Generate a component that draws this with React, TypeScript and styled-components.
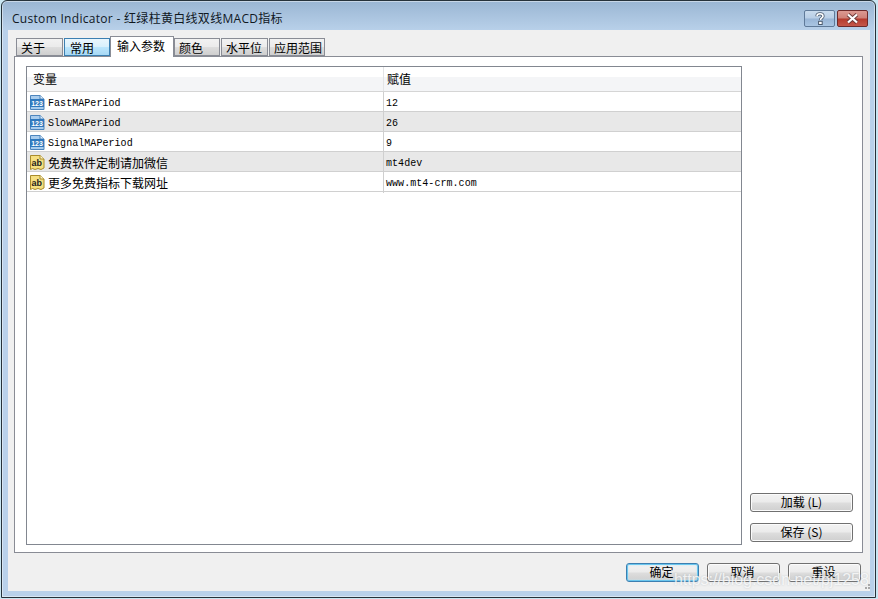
import React from "react";
import styled, { createGlobalStyle } from "styled-components";

const CJK = `"Noto Sans CJK SC", "Liberation Sans", sans-serif`;

const Global = createGlobalStyle`
  html, body { margin: 0; padding: 0; width: 878px; height: 599px; overflow: hidden; background: #c9e6f2; }
  * { box-sizing: border-box; }
`;

const Frame = styled.div`
  position: relative;
  width: 875px;
  height: 598px;
  margin-left: 1px;
  border: 1px solid #26323a;
  border-radius: 6px 6px 0 0;
  background: linear-gradient(180deg, #9ab6d3 0, #b9d1ea 30px);
  box-shadow: inset 0 0 0 1px rgba(255, 255, 255, 0.45);
  display: flex;
  flex-direction: column;
  font-family: ${CJK};
  color: #000;
  font-size: 12px;
`;

const TitleBar = styled.div`
  height: 29px;
  flex: none;
  display: flex;
  align-items: center;
  justify-content: space-between;
  padding: 5px 7px 0 10px;
`;

const Title = styled.div`
  font-family: "Open Sans", ${CJK};
  font-size: 12px;
  letter-spacing: 0.3px;
  color: #10181f;
  white-space: nowrap;
`;

const Captions = styled.div`
  display: flex;
  gap: 2px;
`;

const Caption = styled.div<{ $close?: boolean }>`
  width: 31px;
  height: 17px;
  border: 1px solid ${(p) => (p.$close ? "#6d2a2a" : "#5f7a99")};
  border-radius: 2px;
  display: flex;
  align-items: center;
  justify-content: center;
  background: ${(p) =>
    p.$close
      ? "linear-gradient(180deg, #dc9a92 0, #cf8077 48%, #b53a2c 52%, #c4574a 100%)"
      : "linear-gradient(180deg, #c9dbed 0, #b8cee6 48%, #98b5d6 52%, #a9c5e2 100%)"};
`;

const Client = styled.div`
  flex: none;
  width: 862px;
  height: 561px;
  margin-left: 6px;
  background: #f0f0f0;
  padding: 6px 7px 0 6px;
  display: flex;
  flex-direction: column;
`;

const Tabs = styled.div`
  display: flex;
  align-items: flex-end;
  height: 20px;
  padding-left: 2px;
  flex: none;
  position: relative;
  z-index: 1;
`;

const Tab = styled.div<{ $w: number; $state?: "hover" | "active"; $gap?: number }>`
  width: ${(p) => p.$w}px;
  margin-right: ${(p) => p.$gap ?? 0}px;
  height: ${(p) => (p.$state === "active" ? "21px" : "18px")};
  margin-bottom: ${(p) => (p.$state === "active" ? "-1px" : "0")};
  border: 1px solid ${(p) => (p.$state === "hover" ? "#3c7fb1" : "#898c95")};
  border-bottom: ${(p) => (p.$state === "active" ? "none" : undefined)};
  background: ${(p) =>
    p.$state === "active"
      ? "#fff"
      : p.$state === "hover"
      ? "linear-gradient(180deg, #eaf6fd 0, #d9f0fc 48%, #bce5fc 52%, #a7d9f5 100%)"
      : "linear-gradient(180deg, #f2f2f2 0, #ebebeb 48%, #dddddd 52%, #cfcfcf 100%)"};
  padding-left: ${(p) => (p.$state === "active" ? "6px" : p.$state === "hover" ? "5px" : "4px")};
  line-height: 17px;
  font-size: 12px;
  white-space: nowrap;
`;

const Panel = styled.div`
  width: 849px;
  height: 497px;
  flex: none;
  background: #fff;
  border: 1px solid #898c95;
  padding: 9px 9px 8px 11px;
  display: flex;
  gap: 8px;
`;

const List = styled.div`
  width: 716px;
  height: 479px;
  flex: none;
  border: 1px solid #828790;
  display: flex;
  flex-direction: column;
`;

const HeaderRow = styled.div`
  height: 25px;
  flex: none;
  display: grid;
  grid-template-columns: 357px 1fr;
  background: linear-gradient(180deg, #fff 0, #fff 40%, #f4f5f7 42%, #f4f5f7 100%);
  border-bottom: 1px solid #d5d5d5;
`;

const HeaderCell = styled.div<{ $sep?: boolean }>`
  padding-left: ${(p) => (p.$sep ? "3px" : "6px")};
  line-height: 24px;
  font-size: 12px;
  border-right: ${(p) => (p.$sep ? "none" : "1px solid #e3e4e6")};
`;

const Row = styled.div<{ $alt?: boolean }>`
  height: 20px;
  flex: none;
  display: grid;
  grid-template-columns: 357px 1fr;
  background: ${(p) => (p.$alt ? "#e8e8e8" : "#fff")};
  border-bottom: 1px solid #d0d0d0;
`;

const NameCell = styled.div`
  display: flex;
  align-items: center;
  gap: 3px;
  padding-left: 2px;
  border-right: 1px solid #cfcfcf;
  min-width: 0;
`;

const MonoText = styled.span`
  font-family: "Liberation Mono", monospace;
  font-size: 10px;
  letter-spacing: 0.05px;
  line-height: 19px;
  padding-top: 2px;
  white-space: pre;
`;

const CjkText = styled.span`
  font-size: 12px;
  line-height: 19px;
  white-space: nowrap;
`;

const ValueCell = styled.div`
  display: flex;
  align-items: center;
  padding-left: 2px;
`;

const Side = styled.div`
  flex: 1;
  display: flex;
  flex-direction: column;
  justify-content: flex-end;
  gap: 11px;
  padding-bottom: 2px;
`;

const Btn = styled.div<{ $default?: boolean; $w?: number }>`
  width: ${(p) => (p.$w ? `${p.$w}px` : "100%")};
  height: 19px;
  padding: 0 ${(p) => (p.$w ? "2px" : "0")} 2px 0;
  border: 1px solid ${(p) => (p.$default ? "#3c7fb1" : "#707070")};
  border-radius: 3px;
  display: flex;
  align-items: center;
  justify-content: center;
  font-size: 12px;
  white-space: nowrap;
  background: linear-gradient(180deg, #f2f2f2 0, #ebebeb 48%, #dddddd 52%, #cfcfcf 100%);
  box-shadow: ${(p) =>
    p.$default ? "inset 0 0 0 1px #6ac6ee, inset 0 0 2px 1px #bfe6f7" : "inset 0 0 0 1px #fbfbfb"};
`;

const Footer = styled.div`
  display: flex;
  justify-content: flex-end;
  gap: 8px;
  padding: 10px 2px 0 0;
`;

const Watermark = styled.div`
  position: absolute;
  left: 672px;
  top: 570px;
  font-family: "Liberation Sans", sans-serif;
  font-size: 16px;
  letter-spacing: -0.03px;
  color: rgba(255, 255, 255, 0.78);
  text-shadow: 0 0 2px rgba(150, 160, 170, 0.55);
  white-space: nowrap;
`;

const Grip = styled.svg`
  position: absolute;
  right: 4px;
  bottom: 6px;
`;

const NumIcon = () => (
  <svg width="16" height="17" viewBox="0 0 16 17">
    <path d="M1.5 1.5H11L15 5V15.5H1.5Z" fill="#a9cdee" stroke="#4d85bd" />
    <path d="M11 1.5V5H15" fill="#e3f0fb" stroke="#4d85bd" />
    <rect x="1" y="5" width="14" height="8" fill="#2f78bd" />
    <text x="8" y="11.7" textAnchor="middle" fontFamily="Liberation Sans" fontWeight="700" fontSize="7" fill="#fff">123</text>
  </svg>
);

const StrIcon = () => (
  <svg width="16" height="17" viewBox="0 0 16 17">
    <path d="M1.5 1.5H11L15 5V14L12 15.5L9 14.5L6 15.5L3.5 14.5L1.5 15.5Z" fill="#f5df80" stroke="#a98c2c" />
    <path d="M11 1.5V5H15" fill="#fff5c8" stroke="#a98c2c" />
    <text x="7.8" y="11.5" textAnchor="middle" fontFamily="Liberation Sans" fontWeight="700" fontSize="9" fill="#1c1c1c">ab</text>
  </svg>
);

const rows: { name: string; value: string; kind: "num" | "str" }[] = [
  { name: "FastMAPeriod", value: "12", kind: "num" },
  { name: "SlowMAPeriod", value: "26", kind: "num" },
  { name: "SignalMAPeriod", value: "9", kind: "num" },
  { name: "免费软件定制请加微信", value: "mt4dev", kind: "str" },
  { name: "更多免费指标下载网址", value: "www.mt4-crm.com", kind: "str" },
];

const tabs: { label: string; w: number; state?: "hover" | "active"; gap?: number }[] = [
  { label: "关于", w: 47, gap: 1 },
  { label: "常用", w: 46, state: "hover" },
  { label: "输入参数", w: 64, state: "active" },
  { label: "颜色", w: 46, gap: 1 },
  { label: "水平位", w: 47, gap: 1 },
  { label: "应用范围", w: 56 },
];

export default function App() {
  return (
    <>
      <Global />
      <Frame>
        <TitleBar>
          <Title>Custom Indicator - 红绿柱黄白线双线MACD指标</Title>
          <Captions>
            <Caption>
              <svg width="12" height="13" viewBox="0 0 12 13">
                <path
                  d="M3 4.2C3 2.6 4.4 1.8 6 1.8C7.8 1.8 9 2.7 9 4.2C9 6 6.5 6 6.5 8"
                  fill="none"
                  stroke="#4a5a6e"
                  strokeWidth="3.2"
                />
                <path
                  d="M3 4.2C3 2.6 4.4 1.8 6 1.8C7.8 1.8 9 2.7 9 4.2C9 6 6.5 6 6.5 8"
                  fill="none"
                  stroke="#fff"
                  strokeWidth="1.6"
                />
                <rect x="4.6" y="9.3" width="3.6" height="3.2" fill="#fff" stroke="#4a5a6e" />
              </svg>
            </Caption>
            <Caption $close>
              <svg width="15" height="11" viewBox="0 0 15 11">
                <path d="M3 1.5L12 9.5M12 1.5L3 9.5" stroke="#6b3a3a" strokeWidth="4" />
                <path d="M3 1.5L12 9.5M12 1.5L3 9.5" stroke="#fff" strokeWidth="2.2" />
              </svg>
            </Caption>
          </Captions>
        </TitleBar>
        <Client>
          <Tabs>
            {tabs.map((t) => (
              <Tab key={t.label} $w={t.w} $state={t.state} $gap={t.gap}>
                {t.label}
              </Tab>
            ))}
          </Tabs>
          <Panel>
            <List>
              <HeaderRow>
                <HeaderCell>变量</HeaderCell>
                <HeaderCell $sep>赋值</HeaderCell>
              </HeaderRow>
              {rows.map((r, i) => (
                <Row key={r.name} $alt={i % 2 === 1}>
                  <NameCell>
                    {r.kind === "num" ? <NumIcon /> : <StrIcon />}
                    {r.kind === "num" ? <MonoText>{r.name}</MonoText> : <CjkText>{r.name}</CjkText>}
                  </NameCell>
                  <ValueCell>
                    <MonoText>{r.value}</MonoText>
                  </ValueCell>
                </Row>
              ))}
            </List>
            <Side>
              <Btn>加载 (L)</Btn>
              <Btn>保存 (S)</Btn>
            </Side>
          </Panel>
          <Footer>
            <Btn $default $w={73}>确定</Btn>
            <Btn $w={73}>取消</Btn>
            <Btn $w={73}>重设</Btn>
          </Footer>
        </Client>
        <Watermark>https://blog.csdn.net/pj1258</Watermark>
        <Grip width="8" height="8" viewBox="0 0 8 8">
          <path d="M5 1h2v2H5zM2 4h2v2H2zM5 4h2v2H5z" fill="#a8a8a8" />
        </Grip>
      </Frame>
    </>
  );
}
